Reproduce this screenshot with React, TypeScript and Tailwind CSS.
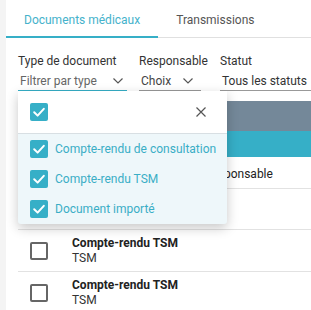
import React from 'react';

const Check = () => (
  <svg viewBox="0 0 18 18" className="w-[18px] h-[18px]">
    <rect x="0" y="0" width="18" height="18" rx="2" fill="#36afc7" />
    <path d="M4.2 9.3 L7.6 12.6 L13.8 5.8" stroke="#fff" strokeWidth="2" fill="none" strokeLinecap="round" strokeLinejoin="round" />
  </svg>
);

const Chevron = () => (
  <svg viewBox="0 0 10 6" className="w-[10px] h-[6px]">
    <path d="M0.5 0.5 L5 5 L9.5 0.5" stroke="#555" strokeWidth="1.2" fill="none" />
  </svg>
);

const types = ['Compte-rendu de consultation', 'Compte-rendu TSM', 'Document importé'];

const rows = [
  { title: 'Compte-rendu TSM', sub: 'TSM' },
  { title: 'Compte-rendu TSM', sub: 'TSM' },
];

export default function App() {
  return (
    <div className="flex w-[311px] h-[310px] overflow-hidden bg-[#f4f4f4] font-['Roboto',sans-serif]">
      <div className="w-[6px] shrink-0" />
      <div className="relative flex-1 bg-white flex flex-col min-w-0">
        {/* tabs */}
        <div className="flex h-[38px] border-b border-[#e0e0e0] shrink-0">
          <div className="px-[18px] pt-[11px] text-[12px] text-[#45b2cb] border-b-2 border-[#36afc7] -mb-px whitespace-nowrap">
            Documents médicaux
          </div>
          <div className="px-[18px] pt-[11px] text-[12px] text-[#555] whitespace-nowrap">Transmissions</div>
        </div>

        {/* filters */}
        <div className="flex gap-[12px] pl-[12px] pt-[15px] shrink-0 whitespace-nowrap">
          <div className="w-[109px] shrink-0">
            <div className="text-[12px] leading-[16px] text-[#333]">Type de document</div>
            <div className="mt-[3px] flex items-center justify-between pl-[2px] pr-[4px] h-[19px] border-b border-[#36afc7] text-[12px] text-[#666]">
              Filtrer par type <Chevron />
            </div>
          </div>
          <div className="w-[69px] shrink-0">
            <div className="text-[12px] leading-[16px] text-[#333]">Responsable</div>
            <div className="mt-[3px] w-[62px] flex items-center justify-between pl-[2px] pr-[8px] h-[19px] border-b border-[#999] text-[12px] text-[#444]">
              Choix <Chevron />
            </div>
          </div>
          <div className="flex-1 min-w-[100px]">
            <div className="text-[12px] leading-[16px] text-[#333]">Statut</div>
            <div className="mt-[3px] flex items-center pl-[2px] h-[19px] border-b border-[#999] text-[12px] text-[#333]">
              Tous les statuts
            </div>
          </div>
        </div>

        {/* table */}
        <div className="ml-[12px] mt-[10px] flex flex-col">
          <div className="h-[30px] bg-[#748899]" />
          <div className="h-[26px] bg-[#36afc7]" />
          <div className="h-[32px] border-b border-[#e2e2e2] flex items-center pl-[186px] pt-[2px] text-[12px] text-[#222] whitespace-nowrap">
            Responsable
          </div>
          <div className="h-[41px] border-b border-[#e2e2e2]" />
          {rows.map((r, i) => (
            <div key={i} className="h-[42px] flex items-start border-b border-[#e2e2e2] last:border-b-0 pt-[6px]">
              <div className="w-[18px] h-[18px] ml-[12px] mt-[6px] border-2 border-[#666] rounded-[2px]" />
              <div className="ml-[24px] leading-[15px]">
                <div className="text-[12px] font-bold text-[#222]">{r.title}</div>
                <div className="text-[12px] text-[#333]">{r.sub}</div>
              </div>
            </div>
          ))}
        </div>

        {/* dropdown */}
        <div className="absolute left-[12px] top-[91px] w-[209px] rounded-b-[3px] bg-[#eef7fa] shadow-[0_4px_12px_rgba(0,0,0,0.22)] overflow-hidden">
          <div className="h-[43px] bg-white flex items-center justify-between pl-[12px] pr-[21px] border-b border-[#d8dfe3]">
            <Check />
            <svg viewBox="0 0 10 10" className="w-[10px] h-[10px]">
              <path d="M0.5 0.5 L9.5 9.5 M9.5 0.5 L0.5 9.5" stroke="#555" strokeWidth="1.2" />
            </svg>
          </div>
          <div>
            {types.map((t) => (
              <div key={t} className="h-[30px] flex items-center pl-[12px] gap-[7px]">
                <Check />
                <span className="text-[12px] text-[#3aaec6] whitespace-nowrap">{t}</span>
              </div>
            ))}
          </div>
        </div>
      </div>
    </div>
  );
}
